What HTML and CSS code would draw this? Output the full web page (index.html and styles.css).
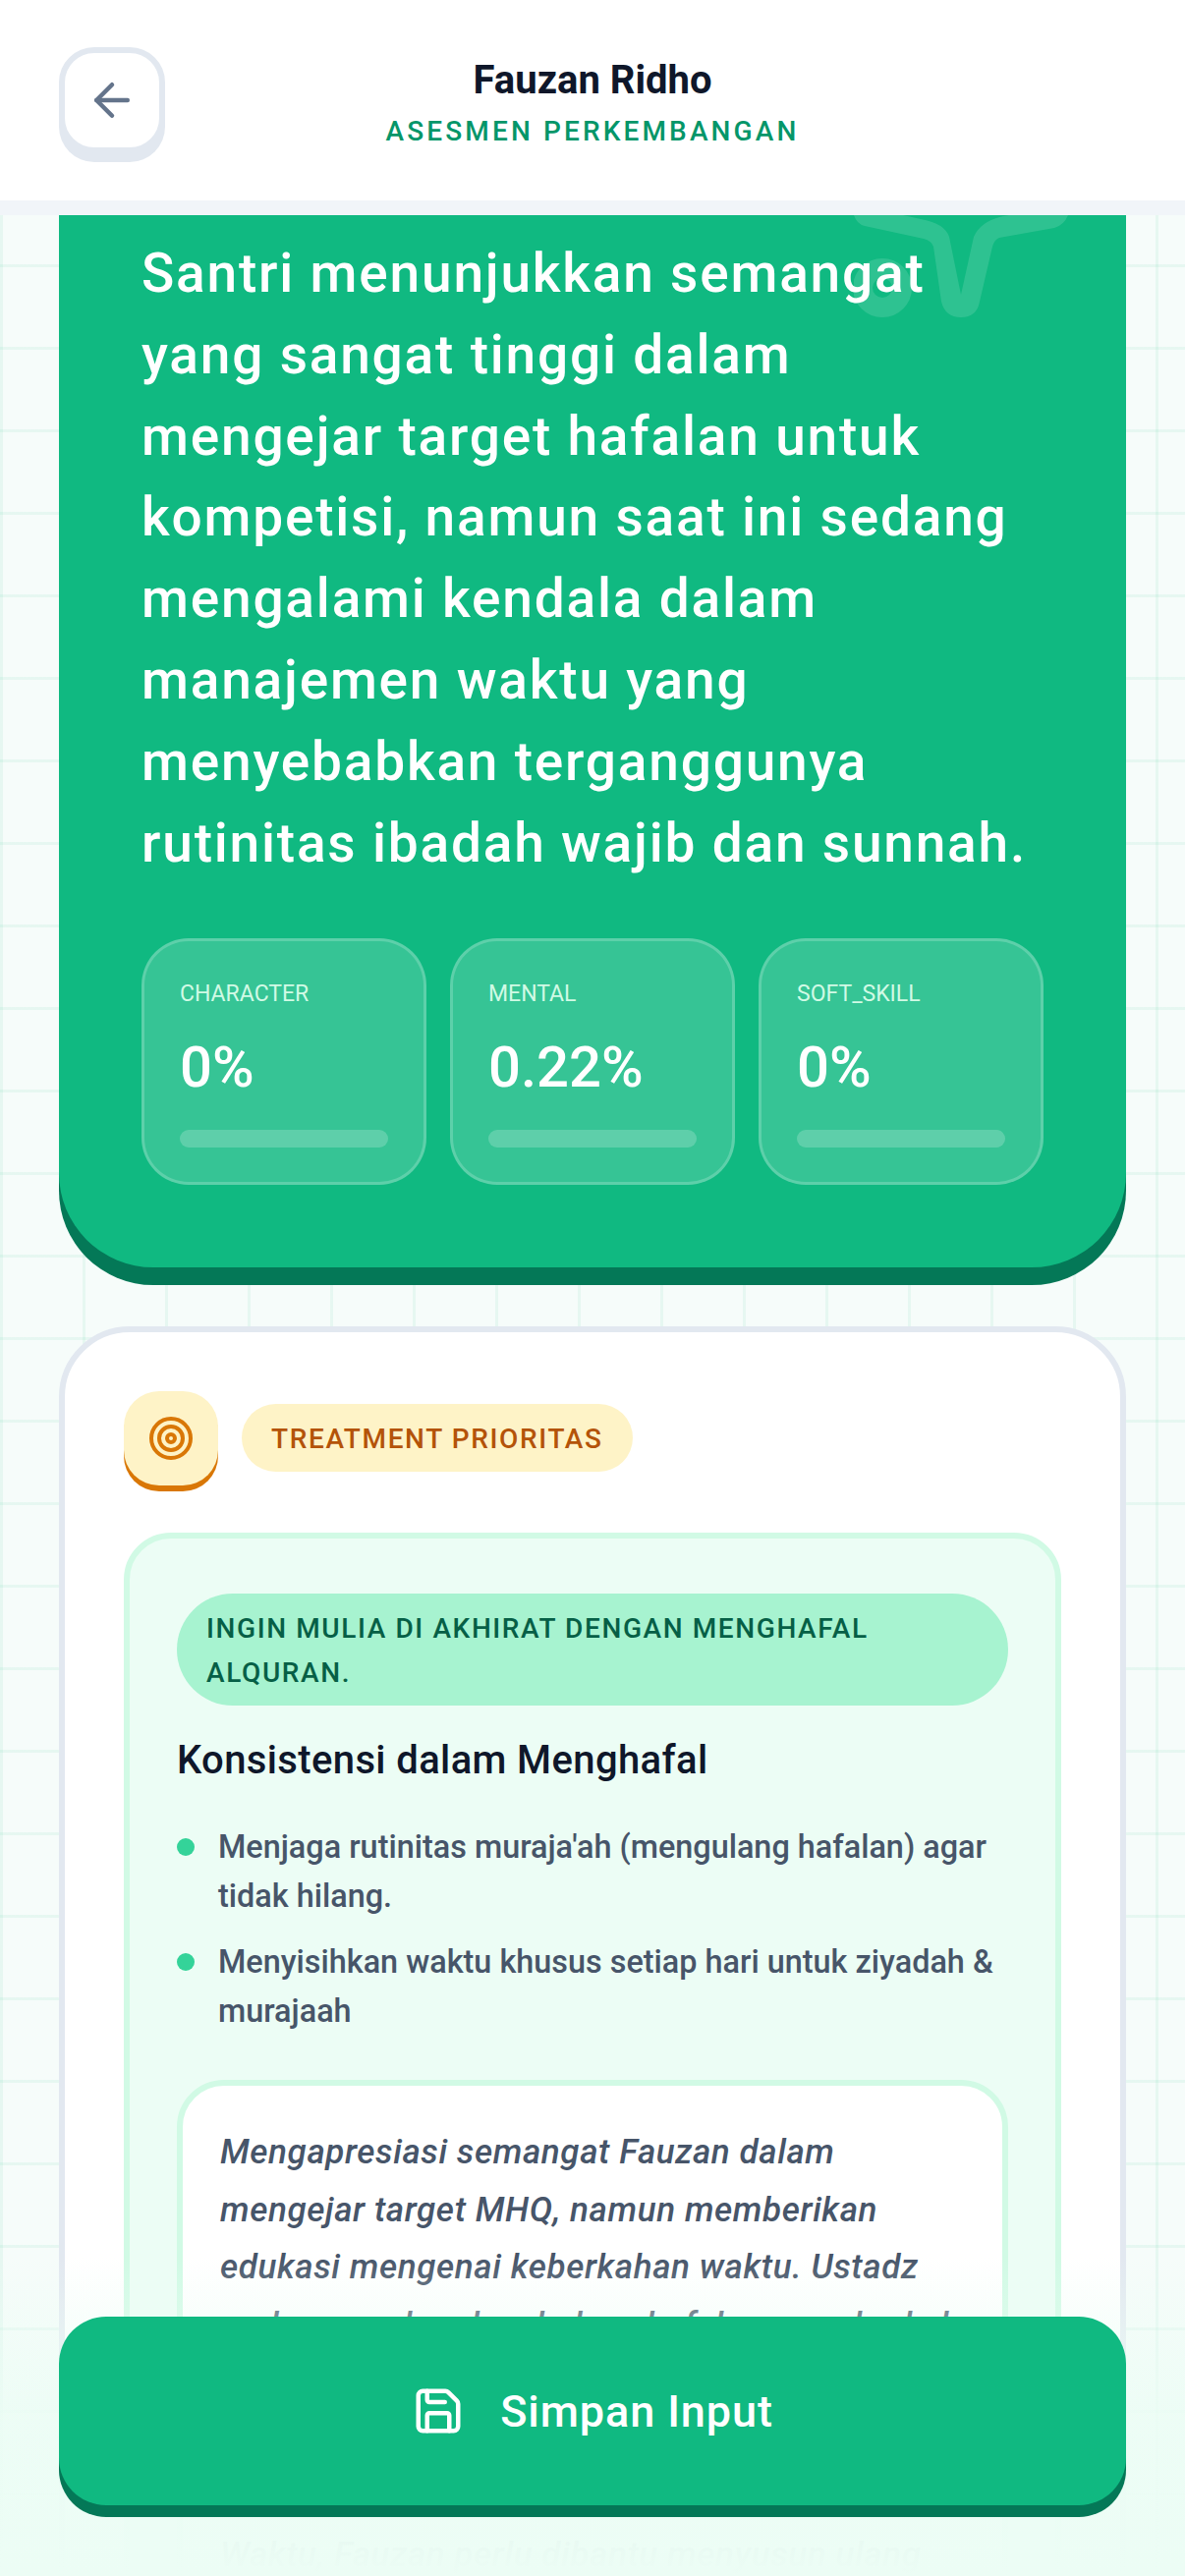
FILE: index.html
```html
<!DOCTYPE html>
<html lang="id">
<head>
  <meta charset="UTF-8">
  <title>Asesmen Perkembangan - Fauzan Ridho</title>
  <link rel="stylesheet" href="styles.css">
</head>
<body>

  <header class="topbar">
    <button type="button" class="back-btn" aria-label="Kembali">
      <svg class="back-icon" viewBox="0 0 24 24"><path d="m12 19-7-7 7-7"/><path d="M19 12H5"/></svg>
    </button>
    <div class="topbar-title">
      <h1>Fauzan Ridho</h1>
      <p>ASESMEN PERKEMBANGAN</p>
    </div>
    <div class="topbar-spacer"></div>
  </header>

  <main class="content">
    <section class="summary-card">
      <svg class="summary-mark" viewBox="0 0 240 130">
        <circle cx="29" cy="74" r="20"/>
        <path d="M0 0 Q3 9 11 11 L71 24 Q79 26 81 32 L89 88 Q93 104 109 104 Q125 104 128 88 L141 32 Q143 25 148 23 L204 13 Q214 10 218 0 L158 0 Q130 4 122 22 L109 81 L97 22 Q92 8 68 4 L50 0 Z"/>
      </svg>
      <p class="summary-text">Santri menunjukkan semangat yang sangat tinggi dalam mengejar target hafalan untuk kompetisi, namun saat ini sedang mengalami kendala dalam manajemen waktu yang menyebabkan terganggunya rutinitas ibadah wajib dan sunnah.</p>
      <div class="stats">
        <div class="stat">
          <span class="stat-label">CHARACTER</span>
          <strong class="stat-value">0%</strong>
          <div class="stat-bar"></div>
        </div>
        <div class="stat">
          <span class="stat-label">MENTAL</span>
          <strong class="stat-value">0.22%</strong>
          <div class="stat-bar"></div>
        </div>
        <div class="stat">
          <span class="stat-label">SOFT_SKILL</span>
          <strong class="stat-value">0%</strong>
          <div class="stat-bar"></div>
        </div>
      </div>
    </section>

    <section class="treatment-card">
      <div class="treatment-head">
        <div class="target-box">
          <svg class="target-icon" viewBox="0 0 24 24"><circle cx="12" cy="12" r="10"/><circle cx="12" cy="12" r="6"/><circle cx="12" cy="12" r="2"/></svg>
        </div>
        <span class="treatment-badge">TREATMENT PRIORITAS</span>
      </div>

      <div class="goal-panel">
        <p class="goal-chip">INGIN MULIA DI AKHIRAT DENGAN MENGHAFAL ALQURAN.</p>
        <h2>Konsistensi dalam Menghafal</h2>
        <ul class="goal-list">
          <li>Menjaga rutinitas muraja'ah (mengulang hafalan) agar tidak hilang.</li>
          <li>Menyisihkan waktu khusus setiap hari untuk ziyadah &amp; murajaah</li>
        </ul>
        <p class="goal-note">Mengapresiasi semangat Fauzan dalam<br>mengejar target MHQ, namun memberikan<br>edukasi mengenai keberkahan waktu. Ustadz<br>perlu memahamkan bahwa hafalan yang berkah<br><br><br><br>Waktu, Fauzan perlu dibantu menyusun ulang</p>
      </div>
    </section>
  </main>

  <footer class="save-bar">
    <button type="button" class="save-btn">
      <svg class="save-icon" viewBox="0 0 24 24"><path d="M15.2 3a2 2 0 0 1 1.4.6l3.8 3.8a2 2 0 0 1 .6 1.4V19a2 2 0 0 1-2 2H5a2 2 0 0 1-2-2V5a2 2 0 0 1 2-2z"/><path d="M17 21v-7a1 1 0 0 0-1-1H8a1 1 0 0 0-1 1v7"/><path d="M7 3v4a1 1 0 0 0 1 1h7"/></svg>
      Simpan Input
    </button>
  </footer>

</body>
</html>
```
FILE: styles.css
```css
* {
  box-sizing: border-box;
}

html, body {
  margin: 0;
  height: 2622px;
  overflow: hidden;
}

body {
  position: relative;
  font-family: Roboto, "Liberation Sans", sans-serif;
  color: #0f172a;
  background-color: #f6fcfa;
  background-image:
    linear-gradient(rgba(16, 185, 129, 0.07) 3px, transparent 3px),
    linear-gradient(90deg, rgba(16, 185, 129, 0.07) 3px, transparent 3px);
  background-size: 84px 84px;
  background-position: 0 17px;
}

button {
  font-family: inherit;
  border: none;
  cursor: pointer;
}

svg {
  fill: none;
  stroke-linecap: round;
  stroke-linejoin: round;
}

/* top bar */
.topbar {
  display: flex;
  height: 219px;
  padding: 48px 60px 0;
  background: white;
  border-bottom: 15px solid #f1f5f9;
}

.back-btn {
  display: flex;
  align-items: center;
  justify-content: center;
  flex: none;
  width: 108px;
  height: 108px;
  padding: 0;
  background: white;
  border: 6px solid #e2e8f0;
  border-radius: 36px;
  box-shadow: 0 9px 0 #e2e8f0;
}

.back-icon {
  width: 54px;
  height: 54px;
  stroke: #64748b;
  stroke-width: 2;
}

.topbar-title {
  flex: 1;
  text-align: center;
}

.topbar-title h1 {
  margin: 14px 0 0;
  font-size: 40px;
  line-height: 40px;
  font-weight: 700;
}

.topbar-title p {
  margin: 15px 0 0;
  font-size: 28px;
  line-height: 34px;
  font-weight: 500;
  letter-spacing: 0.112em;
  color: #059669;
}

.topbar-spacer {
  flex: none;
  width: 108px;
}

/* scrolled content */
.content {
  height: 2403px;
  padding: 0 60px;
  overflow: hidden;
}

.summary-card {
  position: relative;
  margin-top: -168px;
  padding: 186px 84px 84px;
  background: #10b981;
  border-radius: 96px;
  box-shadow: 0 18px 0 #047857;
}

.summary-mark {
  position: absolute;
  top: 168px;
  left: 809px;
  width: 240px;
  height: 130px;
  fill: rgba(255, 255, 255, 0.13);
}

.summary-mark circle {
  fill: none;
  stroke: rgba(255, 255, 255, 0.13);
  stroke-width: 20;
}

.summary-text {
  position: relative;
  margin: 0 0 56px;
  font-size: 55px;
  line-height: 82.8px;
  font-weight: 500;
  letter-spacing: 1.8px;
  color: white;
}

.stats {
  display: grid;
  grid-template-columns: repeat(3, 1fr);
  gap: 24px;
}

.stat {
  height: 251px;
  padding: 39px 36px 0;
  background: rgba(255, 255, 255, 0.16);
  border: 3px solid rgba(255, 255, 255, 0.2);
  border-radius: 48px;
}

.stat-label {
  display: block;
  font-size: 23px;
  line-height: 30px;
  color: #d1fae5;
}

.stat-value {
  display: block;
  margin-top: 24px;
  font-size: 58px;
  line-height: 70px;
  font-weight: 500;
  color: white;
}

.stat-bar {
  height: 18px;
  margin-top: 29px;
  background: rgba(255, 255, 255, 0.2);
  border-radius: 9px;
}

.treatment-card {
  margin-top: 60px;
  padding: 60px;
  background: white;
  border: 6px solid #e2e8f0;
  border-radius: 72px;
}

.treatment-head {
  display: flex;
  align-items: flex-start;
  gap: 24px;
}

.target-box {
  display: flex;
  align-items: center;
  justify-content: center;
  width: 96px;
  height: 96px;
  background: #fef3c7;
  border-radius: 36px;
  box-shadow: 0 6px 0 #d97706;
}

.target-icon {
  width: 48px;
  height: 48px;
  stroke: #d97706;
  stroke-width: 2;
}

.treatment-badge {
  height: 69px;
  margin-top: 13px;
  padding: 0 30px;
  font-size: 28px;
  line-height: 71px;
  font-weight: 500;
  letter-spacing: 0.058em;
  color: #b45309;
  background: #fef3c7;
  border-radius: 35px;
}

.goal-panel {
  margin-top: 48px;
  padding: 56px 48px;
  background: #ecfdf5;
  border: 6px solid #d1fae5;
  border-radius: 48px;
}

.goal-chip {
  margin: 0;
  padding: 13px 30px 11px;
  font-size: 28px;
  line-height: 45px;
  font-weight: 500;
  letter-spacing: 1.6px;
  color: #065f46;
  background: #a7f3d0;
  border-radius: 57px;
}

.goal-panel h2 {
  margin: 29px 0 0;
  font-size: 40px;
  line-height: 54px;
  font-weight: 500;
  letter-spacing: 0.37px;
  color: #0f172a;
}

.goal-list {
  margin: 36px 0 0;
  padding: 0;
  list-style: none;
}

.goal-list li {
  display: flex;
  gap: 24px;
  margin-bottom: 17px;
  font-size: 32.4px;
  line-height: 50px;
  font-weight: 500;
  color: #475569;
}

.goal-list li::before {
  content: "";
  flex: none;
  width: 18px;
  height: 18px;
  margin-top: 16px;
  background: #34d399;
  border-radius: 50%;
}

.goal-note {
  margin: 45px 0 0;
  padding: 39px 36px 39px 38px;
  font-size: 35px;
  line-height: 58.5px;
  font-style: italic;
  font-weight: 500;
  letter-spacing: 0.6px;
  white-space: nowrap;
  overflow: hidden;
  color: #475569;
  background: white;
  border: 6px solid #d1fae5;
  border-radius: 48px;
}

/* sticky save button */
.save-bar {
  position: absolute;
  left: 0;
  right: 0;
  bottom: 0;
  padding: 60px 60px 72px;
  background: linear-gradient(to top, #ecfdf5 0%, rgba(236, 253, 245, 0.9) 50%, rgba(236, 253, 245, 0) 100%);
}

.save-btn {
  display: flex;
  align-items: center;
  justify-content: center;
  gap: 36px;
  width: 100%;
  height: 192px;
  font-size: 45px;
  font-weight: 500;
  letter-spacing: 0.02em;
  color: white;
  background: #10b981;
  border-radius: 48px;
  box-shadow: 0 12px 0 #047857;
}

.save-icon {
  width: 54px;
  height: 54px;
  stroke: white;
  stroke-width: 2;
}
```
